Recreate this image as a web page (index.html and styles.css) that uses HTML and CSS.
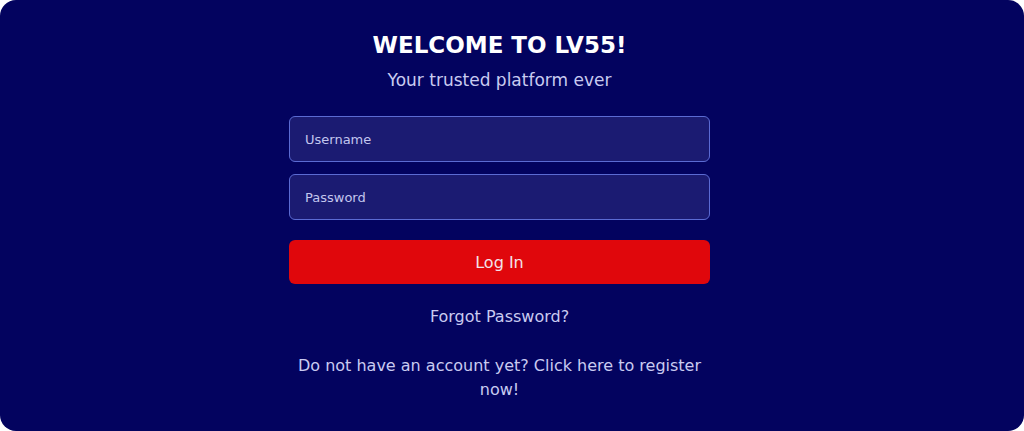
FILE: index.html
```html
<!DOCTYPE html>
<html lang="en">
<head>
    <meta charset="UTF-8">
    <meta name="viewport" content="width=device-width, initial-scale=1.0">
    <title>LV55 Login</title>
    <link rel="stylesheet" href="styles.css">
</head>
<body>
    <div class="card">
        <div class="login">
            <h1>WELCOME TO LV55!</h1>
            <p class="subtitle">Your trusted platform ever</p>

            <form class="login-form">
                <input type="text" class="field" placeholder="Username">
                <input type="password" class="field" placeholder="Password">
                <button type="submit" class="btn">Log In</button>
            </form>

            <a href="#" class="forgot">Forgot Password?</a>
            <p class="register">Do not have an account yet? Click here to register now!</p>
        </div>
    </div>
</body>
</html>
```

FILE: styles.css
```css
body {
    margin: 0;
    background: #ffffff;
    font-family: 'DejaVu Sans', 'Open Sans', sans-serif;
}
.card {
    height: 431px;
    box-sizing: border-box;
    background: #03035f;
    border-radius: 16px;
    display: flex;
    justify-content: center;
    padding-right: 25px;
}
.login {
    width: 421px;
    display: flex;
    flex-direction: column;
    align-items: center;
    padding-top: 30px;
}
h1 {
    margin: 0;
    color: #ffffff;
    font-size: 23px;
    font-weight: 700;
    line-height: 30px;
}
.subtitle {
    margin: 8px 0 0;
    color: #c9cbf1;
    font-size: 17px;
    line-height: 24px;
}
.login-form {
    width: 100%;
    margin-top: 24px;
    display: flex;
    flex-direction: column;
    gap: 12px;
}
.field {
    height: 46px;
    box-sizing: border-box;
    padding: 0 15px;
    background: #1b1b72;
    border: 1px solid #5b6bd3;
    border-radius: 6px;
    color: #ffffff;
    font-family: inherit;
    font-size: 13px;
    outline: none;
}
.field::placeholder {
    color: #c3c6ee;
}
.btn {
    height: 44px;
    margin-top: 8px;
    background: #e0070c;
    border: none;
    border-radius: 6px;
    color: #f3e2ea;
    font-family: inherit;
    font-size: 16px;
    cursor: pointer;
}
.forgot {
    margin-top: 21px;
    color: #c9cbf1;
    font-size: 16px;
    line-height: 24px;
    text-decoration: none;
}
.register {
    margin: 25px 0 0;
    color: #c9cbf1;
    font-size: 16px;
    line-height: 24px;
    text-align: center;
}
```
